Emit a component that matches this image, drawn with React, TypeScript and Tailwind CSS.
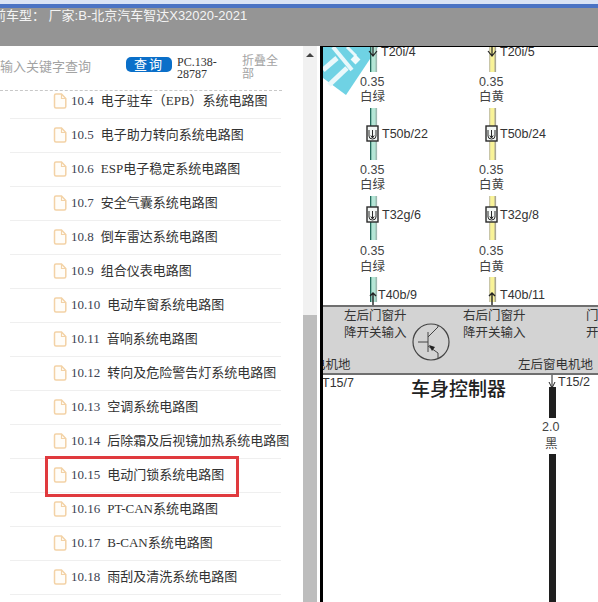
const rows = [
  ["10.4", "电子驻车（EPB）系统电路图"],
  ["10.5", "电子助力转向系统电路图"],
  ["10.6", "ESP电子稳定系统电路图"],
  ["10.7", "安全气囊系统电路图"],
  ["10.8", "倒车雷达系统电路图"],
  ["10.9", "组合仪表电路图"],
  ["10.10", "电动车窗系统电路图"],
  ["10.11", "音响系统电路图"],
  ["10.12", "转向及危险警告灯系统电路图"],
  ["10.13", "空调系统电路图"],
  ["10.14", "后除霜及后视镜加热系统电路图"],
  ["10.15", "电动门锁系统电路图"],
  ["10.16", "PT-CAN系统电路图"],
  ["10.17", "B-CAN系统电路图"],
  ["10.18", "雨刮及清洗系统电路图"],
];

function FileIcon() {
  return (
    <svg width="14" height="16" viewBox="0 0 14 16" className="shrink-0">
      <path d="M1.5 2.5 Q1.5 1 3 1 H8.5 L12.8 5.5 V13.5 Q12.8 15 11.3 15 H3 Q1.5 15 1.5 13.5 Z" fill="#fffdf9" stroke="#f3d2a6" strokeWidth="1.5" />
      <path d="M8.5 1 V5.5 H12.8" fill="none" stroke="#f3d2a6" strokeWidth="1.2" />
    </svg>
  );
}

function Wire({ x, yellow, y1, y2 }: { x: number; yellow: boolean; y1: number; y2: number }) {
  const h = y2 - y1;
  return (
    <g>
      <rect x={x + 1} y={y1} width="7" height={h} fill={yellow ? "#f9f398" : "#b4e6d6"} />
      <rect x={x + 1} y={y1} width="1.3" height={h} fill={yellow ? "#c9c6a8" : "#246b5c"} />
      <rect x={x + 6.5} y={y1} width="1.6" height={h} fill={yellow ? "#a9a692" : "#9cb9b0"} />
    </g>
  );
}

function Connector({ x, y }: { x: number; y: number }) {
  return (
    <g fill="none" stroke="#2a2a2a">
      <rect x={x} y={y} width="11" height="15" fill="#f4f8f6" strokeWidth="1.4" />
      <path d={`M${x + 2} ${y + 4} V${y + 10} Q${x + 2} ${y + 13} ${x + 5.5} ${y + 13} Q${x + 9} ${y + 13} ${x + 9} ${y + 10} V${y + 4}`} strokeWidth="1" />
      <path d={`M${x + 5.5} ${y + 4} V${y + 12} M${x + 3.8} ${y + 9.5} L${x + 5.5} ${y + 12} L${x + 7.2} ${y + 9.5}`} strokeWidth="1" />
    </g>
  );
}

function WireColumn({ x, yellow, label, tags }: { x: number; yellow: boolean; label: string; tags: string[] }) {
  const tx = x + 12;
  return (
    <g>
      <Wire x={x} yellow={yellow} y1={46} y2={72} />
      <Wire x={x} yellow={yellow} y1={108} y2={160} />
      <Wire x={x} yellow={yellow} y1={196} y2={240} />
      <Wire x={x} yellow={yellow} y1={277} y2={302} />
      <path d={`M${x + 4} 46 V56 M${x} 51 L${x + 4} 56 L${x + 8} 51`} stroke="#222" fill="none" strokeWidth="1.2" />
      <text x={tx} y={56} fontSize="12.5" fill="#333">{tags[0]}</text>
      <text x={x - 9} y={86} fontSize="12.5" fill="#444">0.35</text>
      <text x={x - 9} y={101} fontSize="12.5" fill="#444">{label}</text>
      <Connector x={x - 2} y={126} />
      <text x={tx + (yellow ? 0 : 1)} y={138} fontSize="12.5" fill="#333">{tags[1]}</text>
      <text x={x - 9} y={174} fontSize="12.5" fill="#444">0.35</text>
      <text x={x - 9} y={189} fontSize="12.5" fill="#444">{label}</text>
      <Connector x={x - 2} y={207} />
      <text x={tx + (yellow ? 0 : 1)} y={219} fontSize="12.5" fill="#333">{tags[2]}</text>
      <text x={x - 9} y={255} fontSize="12.5" fill="#444">0.35</text>
      <text x={x - 9} y={271} fontSize="12.5" fill="#444">{label}</text>
      <path d={`M${x + 4} 306 V293 M${x + 1} 296 L${x + 4} 293 L${x + 7} 296`} stroke="#222" fill="none" strokeWidth="1.4" />
      <text x={x + (yellow ? 12 : 9)} y={299} fontSize="12.5" fill="#333">{tags[3]}</text>
    </g>
  );
}

function Diagram() {
  return (
    <svg viewBox="323 47 275 555" width="275" height="555" className="block" fontFamily="'Liberation Sans','Noto Sans CJK SC',sans-serif">
      <rect x="323" y="47" width="275" height="555" fill="#fff" />
      {/* cyan watermark */}
      <path d="M323 47 H378 L346 95 L323 78 Z" fill="#6fd2e4" />
      <g stroke="#e9f8fb" fill="none">
        <path d="M323 70 L337 58" strokeWidth="5" />
        <path d="M329 85 L347 68" strokeWidth="5" />
        <path d="M333 47 L352 70" strokeWidth="4" />
        <path d="M347 47 L356 56" strokeWidth="3" />
      </g>
      <rect x="352" y="56" width="7" height="7" transform="rotate(45 355.5 59.5)" fill="#f1fbfc" />
      <WireColumn x={369} yellow={false} label="白绿" tags={["T20i/4", "T50b/22", "T32g/6", "T40b/9"]} />
      <WireColumn x={488} yellow={true} label="白黄" tags={["T20i/5", "T50b/24", "T32g/8", "T40b/11"]} />

      <rect x="323" y="306" width="275" height="68" fill="#d3d3d3" />
      <rect x="323" y="305" width="275" height="2" fill="#6f6f6f" />
      <rect x="323" y="373" width="275" height="2" fill="#6f6f6f" />
      <g fontSize="12.5" fill="#333">
        <text x="344" y="320">左后门窗升</text>
        <text x="344" y="337">降开关输入</text>
        <text x="463" y="320">右后门窗升</text>
        <text x="463" y="337">降开关输入</text>
        <text x="586" y="320">门</text>
        <text x="586" y="337">开</text>
        <text x="313" y="369">电机地</text>
        <text x="518" y="369">左后窗电机地</text>
      </g>
      <circle cx="431" cy="342" r="18" fill="none" stroke="#444" strokeWidth="1.2" />
      <path d="M418 342 H428 M428 332 V352 M428 337 L438 327 V325 M428 346 L438 353 V359" fill="none" stroke="#444" strokeWidth="1" />
      <path d="M429 345 L435 347 L432 351 Z" fill="#222" />

      <text x="322" y="387" fontSize="12.5" fill="#333">T15/7</text>
      <text x="558" y="386" fontSize="12.5" fill="#333">T15/2</text>
      <text x="411" y="396" fontSize="19" fill="#222" fontWeight="500">车身控制器</text>
      <path d="M552 375 V388 M549 382 L552 388 L555 382" fill="none" stroke="#222" strokeWidth="1" />
      <rect x="549" y="387" width="7" height="31" fill="#1f1f1f" />
      <text x="542" y="431" fontSize="12.5" fill="#444">2.0</text>
      <text x="545" y="448" fontSize="12.5" fill="#444">黑</text>
      <rect x="549" y="454" width="7" height="148" fill="#1f1f1f" />
    </svg>
  );
}

export default function App() {
  return (
    <div className="flex h-[602px] w-[598px] flex-col overflow-hidden bg-white font-['Liberation_Serif','Noto_Sans_CJK_SC',serif]">
      <div className="h-1 bg-[#d9e3f5]" />
      <div className="h-[4px] bg-[#4a73c4]" />
      <div className="h-[38px] bg-[#959595] pt-[1px] font-['Liberation_Sans','Noto_Sans_CJK_SC',sans-serif] text-[13px] leading-[14px] text-[#f4f4f4]">
        <div className="-ml-[7px] whitespace-nowrap">前车型：&nbsp;厂家:B-北京汽车智达X32020-2021</div>
      </div>
      <div className="flex min-h-0 flex-1">
        <div className="w-[303px] shrink-0 overflow-hidden">
          <div className="mr-[21px] flex h-[45px] items-center border-b border-dashed border-[#c8c8c8]">
            <span className="-mt-[3px] w-[126px] shrink-0 text-[13px] text-[#a3a3a3]">输入关键字查询</span>
            <button className="-mt-[8px] h-[15px] w-[46px] shrink-0 rounded-[5px] bg-[#0a6fc9] text-center text-[13px] leading-[15px] tracking-[2px] text-white">查询</button>
            <span className="ml-[5px] w-[48px] shrink-0 text-[12px] leading-[12px] text-[#333]">PC.138-28787</span>
            <span className="ml-[17px] w-[38px] shrink-0 text-[12px] leading-[13px] text-[#a3a3a3]">折叠全部</span>
          </div>
          <div className="-mt-[6px]">
            {rows.map(([num, title]) => (
              <div key={num} className="relative ml-[10px] flex h-[34px] w-[271px] items-center gap-[4px] whitespace-nowrap border-b border-[#efefef] pb-[2px] pl-[43px] text-[13px] text-[#333]">
                <FileIcon />
                <span className="mr-[3px] text-[#3b4250]">{num}</span>
                <span>{title}</span>
                {num === "10.15" && <div className="absolute -top-[3px] left-[35px] h-[41px] w-[194px] border-[3px] border-[#e03a3e]" />}
              </div>
            ))}
          </div>
        </div>
        <div className="flex w-[14px] shrink-0 flex-col items-center bg-[#f1f1f1]">
          <div className="mt-[7px] h-0 w-0 border-x-[4px] border-b-[4px] border-x-transparent border-b-[#444]" />
          <div className="mt-[258px] h-[290px] w-full bg-[#bdbdbd]" />
        </div>
        <div className="w-[3px] shrink-0 bg-white" />
        <div className="flex flex-1 flex-col border-l-[3px] border-black">
          <div className="h-[1px] bg-black" />
          <div className="overflow-hidden"><Diagram /></div>
        </div>
      </div>
    </div>
  );
}
